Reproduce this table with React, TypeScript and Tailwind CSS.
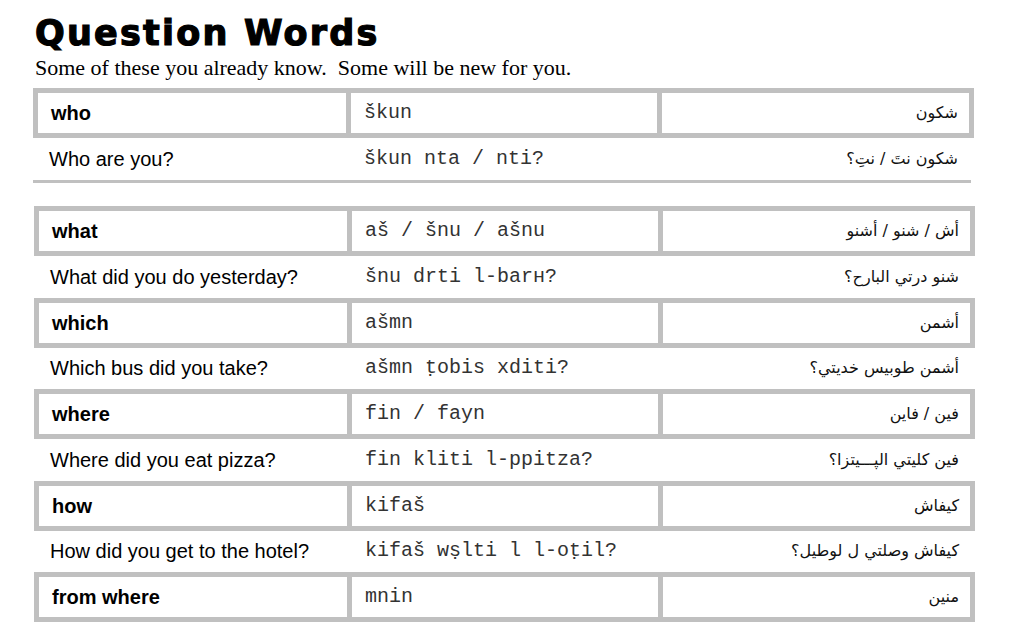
import React from "react";

type Row = { en: string; tr: string; ar: string; exEn: string; exTr: string; exAr: string };

const rows: Row[] = [
  { en: "who", tr: "škun", ar: "شكون", exEn: "Who are you?", exTr: "škun nta / nti?", exAr: "شكون نتَ / نتِ؟" },
  { en: "what", tr: "aš / šnu / ašnu", ar: "أش / شنو / أشنو", exEn: "What did you do yesterday?", exTr: "šnu drti l-barʜ?", exAr: "شنو درتي البارح؟" },
  { en: "which", tr: "ašmn", ar: "أشمن", exEn: "Which bus did you take?", exTr: "ašmn ṭobis xditi?", exAr: "أشمن طوبيس خديتي؟" },
  { en: "where", tr: "fin / fayn", ar: "فين / فاين", exEn: "Where did you eat pizza?", exTr: "fin kliti l-ppitza?", exAr: "فين كليتي الپـــيتزا؟" },
  { en: "how", tr: "kifaš", ar: "كيفاش", exEn: "How did you get to the hotel?", exTr: "kifaš wṣlti l l-oṭil?", exAr: "كيفاش وصلتي ل لوطيل؟" },
  { en: "from where", tr: "mnin", ar: "منين", exEn: "", exTr: "", exAr: "" },
];

const sans = "font-['Liberation_Sans',Arial,sans-serif]";
const mono = "font-['Liberation_Mono','DejaVu_Sans_Mono',monospace]";
const arab = "font-['DejaVu_Sans',sans-serif]";

function Box({ r }: { r: Row }) {
  return (
    <div className="flex h-[50px] w-[941px] border-[5px] border-[#c0c0c0]">
      <div className={`w-[308px] flex items-center pl-[13px] font-bold text-[20px] text-black ${sans}`}>{r.en}</div>
      <div className={`w-[311px] border-l-[5px] border-[#c0c0c0] flex items-center pl-[13px] text-[20px] text-[#333] ${mono}`}>
        {r.tr}
      </div>
      <div
        dir="rtl"
        className={`w-[312px] border-l-[5px] border-[#c0c0c0] flex items-center pr-[11px] text-[16px] text-[#111] ${arab}`}
      >
        {r.ar}
      </div>
    </div>
  );
}

function Example({ r, h }: { r: Row; h: string }) {
  return (
    <div className={`flex w-[941px] px-[5px] ${h}`}>
      <div className={`w-[308px] flex items-center pl-[11px] text-[20px] text-black ${sans}`}>{r.exEn}</div>
      <div className={`w-[311px] flex items-center pl-[18px] text-[20px] text-[#333] whitespace-pre ${mono}`}>{r.exTr}</div>
      <div dir="rtl" className={`w-[312px] flex items-center pr-[11px] text-[16px] text-[#111] ${arab}`}>
        {r.exAr}
      </div>
    </div>
  );
}

export default function App() {
  return (
    <div className="w-[1019px] h-[630px] bg-white overflow-hidden pt-[16px]">
      <h1 className="ml-[35px] h-[34px] leading-[34px] text-[35px] font-bold tracking-[2.2px] text-black [-webkit-text-stroke:1.2px_black] font-['DejaVu_Sans',sans-serif]">
        Question Words
      </h1>
      <p className="ml-[35px] mt-[6px] h-[24px] leading-[24px] text-[22px] text-black font-['Liberation_Serif','Times_New_Roman',serif] whitespace-pre">
        {"Some of these you already know.  Some will be new for you."}
      </p>

      <div className="ml-[33px] mt-[8px]">
        <Box r={rows[0]} />
        <Example r={rows[0]} h="h-[42px]" />
        <div className="h-[3px] w-[938px] bg-[#c0c0c0]" />
      </div>

      <div className="ml-[34px] mt-[23px]">
        {rows.slice(1).map((r, i) => (
          <React.Fragment key={r.en}>
            <Box r={r} />
            {i < 4 && <Example r={r} h="h-[41.5px]" />}
          </React.Fragment>
        ))}
      </div>
    </div>
  );
}
